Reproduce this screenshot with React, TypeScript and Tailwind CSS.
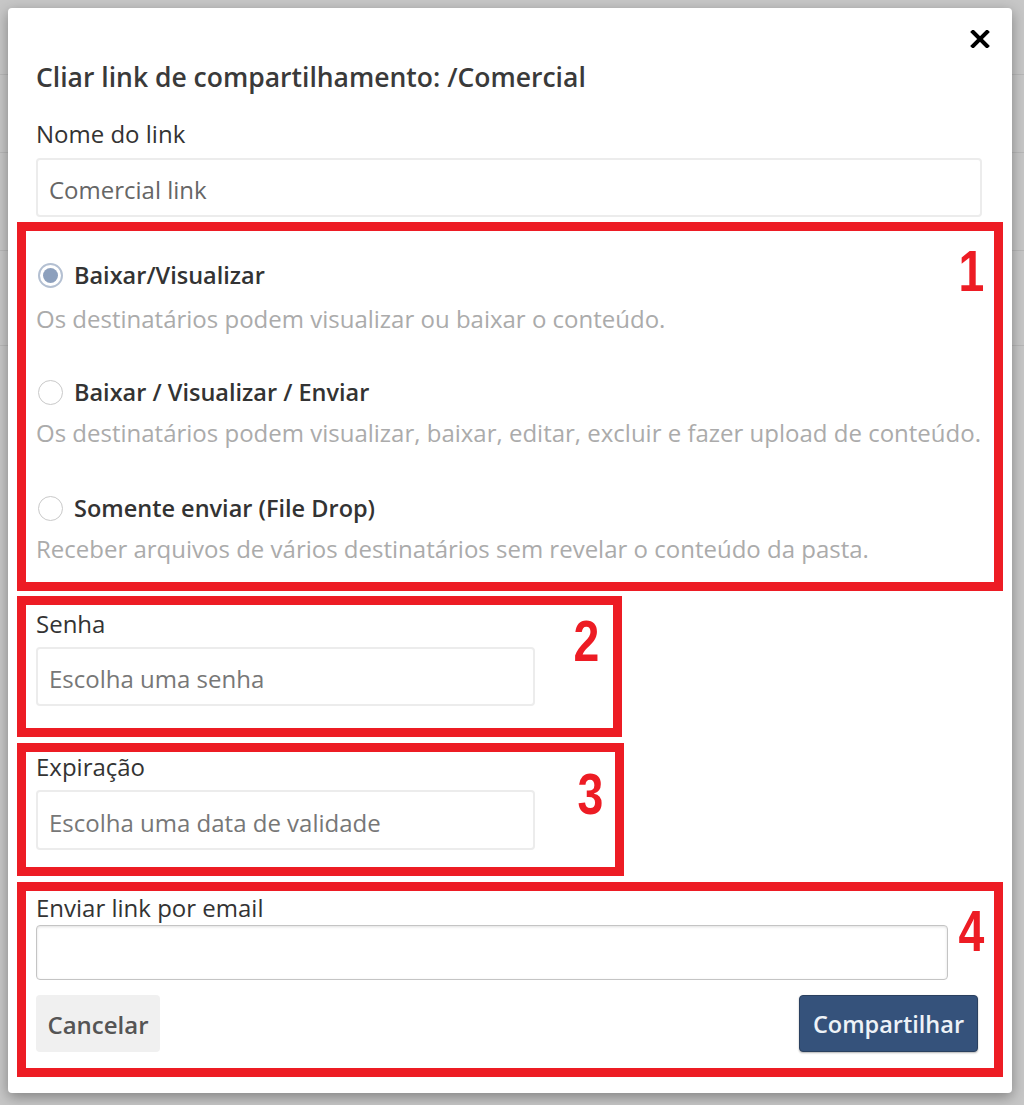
const font = { fontFamily: '"Open Sans", "Noto Sans", sans-serif' };

type OptionProps = {
  checked?: boolean;
  label: string;
  desc: string;
  top: string;
  gap: string;
};

function Radio({ checked }: { checked?: boolean }) {
  if (checked) {
    return (
      <span className="flex h-[25px] w-[25px] shrink-0 items-center justify-center rounded-full border-[2px] border-[#b4c0d2] bg-white">
        <span className="h-[15px] w-[15px] rounded-full bg-[#8da0bd]" />
      </span>
    );
  }
  return <span className="h-[25px] w-[25px] shrink-0 rounded-full border-[1.5px] border-[#c9c9c9] bg-white" />;
}

function Option({ checked, label, desc, top, gap }: OptionProps) {
  return (
    <div className={top}>
      <div className="flex h-[30px] items-center gap-[11px] pl-[12px]">
        <Radio checked={checked} />
        <span className="text-[23.5px] font-semibold leading-[30px] text-[#333]">{label}</span>
      </div>
      <div className={`${gap} pl-[10px] text-[24px] leading-[30px] text-[#ababab]`}>{desc}</div>
    </div>
  );
}

function Marker({ n, className }: { n: string; className: string }) {
  return (
    <span
      className={`absolute inline-block origin-right scale-x-[0.8] text-[58px] font-bold leading-none text-[#ed1c24] ${className}`}
      style={{ fontFamily: '"Liberation Sans", Arial, sans-serif' }}
    >
      {n}
    </span>
  );
}

function Field({ label, placeholder, className }: { label: string; placeholder: string; className: string }) {
  return (
    <>
      <div className="text-[24px] leading-[30px] text-[#333]">{label}</div>
      <div className={`mt-[8px] flex w-[499px] items-center rounded-[4px] border-[2px] border-[#ececec] px-[11px] text-[24px] text-[#777] ${className}`}>
        {placeholder}
      </div>
    </>
  );
}

export default function App() {
  return (
    <div className="relative h-[1105px] w-[1024px] overflow-hidden bg-[#c7c7c7]" style={font}>
      {/* faint page behind the modal */}
      <div className="absolute left-0 top-[74px] h-px w-[1024px] bg-[#b8b8b8]" />
      <div className="absolute left-0 top-[152px] h-px w-[1024px] bg-[#b8b8b8]" />
      <div className="absolute left-0 top-[250px] h-px w-[1024px] bg-[#b8b8b8]" />
      <div className="absolute left-0 top-[345px] h-px w-[1024px] bg-[#b8b8b8]" />

      <div className="relative ml-[8px] mt-[8px] h-[1085px] w-[1004px] rounded-[4px] bg-white px-[9px] shadow-[0_4px_14px_rgba(0,0,0,0.35)]">
        <div className="flex h-[53px] items-start justify-end pr-[13px] pt-[22px]">
          <svg width="20" height="18" viewBox="0 0 20 18">
            <path d="M3 2 L17 16 M17 2 L3 16" stroke="#000" strokeWidth="4" strokeLinecap="square" />
          </svg>
        </div>

        <div className="px-[19px]">
          <h2 className="text-[26.5px] font-semibold leading-[32px] text-[#3a3a3a]">
            Cliar link de compartilhamento: /Comercial
          </h2>
          <div className="mt-[26px] text-[24px] leading-[30px] text-[#333]">Nome do link</div>
          <div className="mt-[9px] flex h-[59px] w-[946px] items-center rounded-[4px] border-[2px] border-[#ececec] px-[11px] pt-[4px] text-[24px] text-[#666]">
            Comercial link
          </div>
        </div>

        {/* 1 */}
        <div className="relative mt-[5px] border-[9px] border-[#ed1c24] pb-[18px]">
          <Marker n="1" className="right-[10px] top-[11px]" />
          <Option checked label="Baixar/Visualizar" desc="Os destinatários podem visualizar ou baixar o conteúdo." top="pt-[29px]" gap="mt-[14px]" />
          <Option
            label="Baixar / Visualizar / Enviar"
            desc="Os destinatários podem visualizar, baixar, editar, excluir e fazer upload de conteúdo."
            top="mt-[43px]"
            gap="mt-[11px]"
          />
          <Option
            label="Somente enviar (File Drop)"
            desc="Receber arquivos de vários destinatários sem revelar o conteúdo da pasta."
            top="mt-[45px]"
            gap="mt-[11px]"
          />
        </div>

        {/* 2 */}
        <div className="relative mt-[5px] w-[605px] border-[9px] border-[#ed1c24] pb-[22px] pl-[10px] pt-[4px]">
          <Marker n="2" className="right-[14px] top-[7px]" />
          <Field label="Senha" placeholder="Escolha uma senha" className="h-[59px] pt-[4px]" />
        </div>

        {/* 3 */}
        <div className="relative mt-[6px] w-[607px] border-[9px] border-[#ed1c24] pb-[17px] pl-[10px]">
          <Marker n="3" className="right-[12px] top-[13px]" />
          <Field label="Expiração" placeholder="Escolha uma data de validade" className="h-[60px] pt-[6px]" />
        </div>

        {/* 4 */}
        <div className="relative mt-[6px] border-[9px] border-[#ed1c24] pb-[16px] pl-[10px] pr-[16px] pt-[2px]">
          <Marker n="4" className="right-[10px] top-[11px]" />
          <div className="text-[24px] leading-[30px] text-[#333]">Enviar link por email</div>
          <div className="mt-[2px] h-[55px] w-[912px] rounded-[4px] border-[1.5px] border-[#c4c4c4] shadow-[inset_0_1px_3px_rgba(0,0,0,0.12)]" />
          <div className="mt-[15px] flex items-center justify-between">
            <button className="h-[57px] w-[124px] rounded-[4px] bg-[#f0f0f0] pt-[2px] text-[24px] font-semibold text-[#555]">
              Cancelar
            </button>
            <button className="h-[57px] w-[179px] rounded-[4px] border border-[#2a405f] bg-[#35527b] pt-[2px] text-[23.5px] font-semibold text-[#eef2f7] shadow-[0_1px_2px_rgba(0,0,0,0.3)]">
              Compartilhar
            </button>
          </div>
        </div>
      </div>
    </div>
  );
}
